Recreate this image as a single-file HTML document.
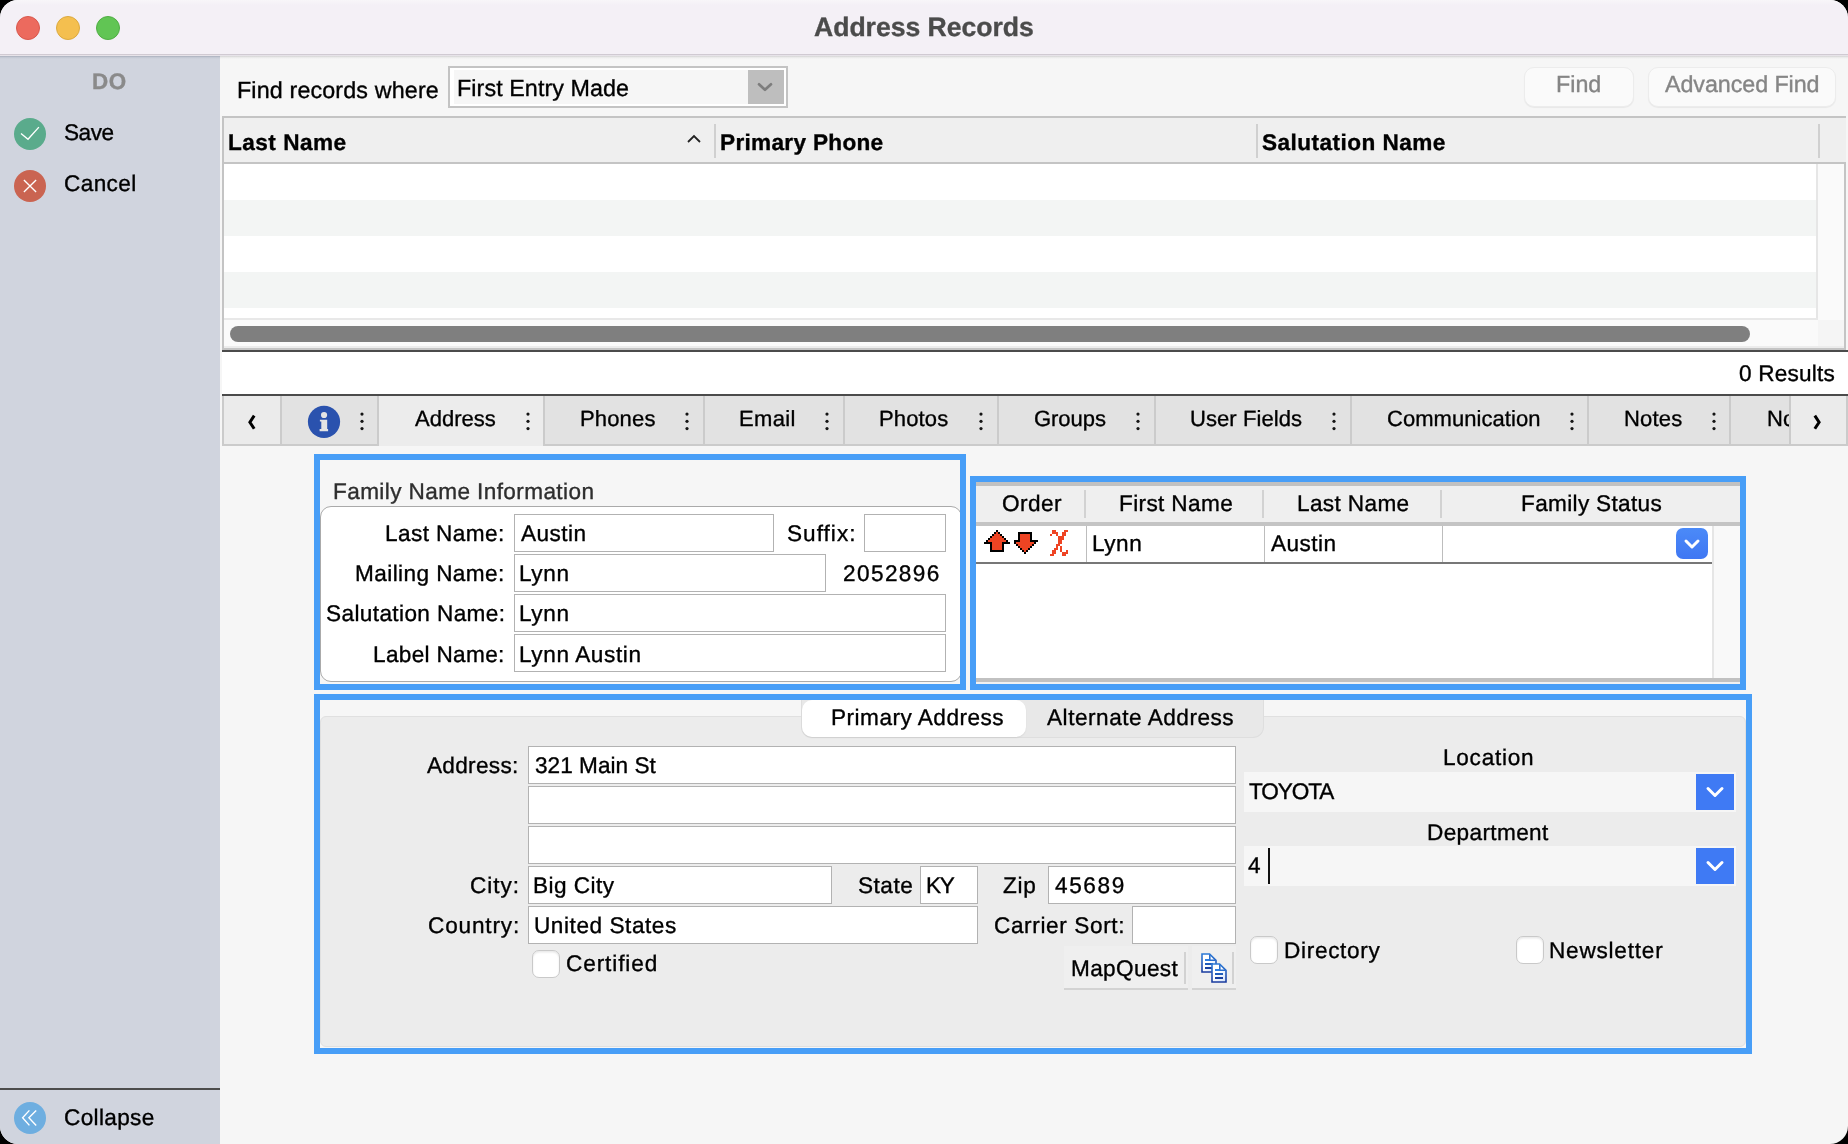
<!DOCTYPE html>
<html>
<head>
<meta charset="utf-8">
<title>Address Records</title>
<style>
*{box-sizing:border-box;margin:0;padding:0}
html,body{width:1848px;height:1144px;overflow:hidden;background:#000}
body{font-family:"Liberation Sans",sans-serif;color:#000;position:relative;text-rendering:geometricPrecision}
.abs,.t,.tb,.tab,.inp{position:absolute}
#win{position:absolute;left:0;top:0;width:1848px;height:1144px;border-radius:18px;background:#f6f6f6;overflow:hidden}
.t{white-space:nowrap;font-size:22.6px;line-height:26px;letter-spacing:.35px}
.tb{white-space:nowrap;font-size:22.4px;line-height:26px;font-weight:bold;letter-spacing:.1px}
.x{position:absolute;white-space:nowrap;line-height:30px;will-change:transform;-webkit-text-stroke:0.35px currentColor}
.r{text-align:right}
.c{text-align:center}
.inp{background:#fff;border:1px solid #b2b2b2;height:38px}
.tab{top:396px;height:48px;background:#e0e0e0;border-right:2px solid #c8c8c8;font-size:24px;line-height:26px;white-space:nowrap}
.tab span{position:absolute;top:10px;will-change:transform}
.tab i{position:absolute;top:13px;width:4px;height:4px;border-radius:2px;background:#222;box-shadow:0 9px 0 #222,0 18px 0 #222}
.cb{position:absolute;width:28px;height:28px;border-radius:7px;background:#fff;border:1px solid #c9c9c9;box-shadow:inset 0 1.5px 2px rgba(0,0,0,.09)}
</style>
</head>
<body>
<div id="win">

<!-- TITLE BAR -->
<div class="abs" style="left:0;top:0;width:1848px;height:54px;background:linear-gradient(#f8f6f9 0,#f4f0f6 5px)"></div>
<div class="abs" style="left:0;top:54px;width:1848px;height:1px;background:#d0cad2"></div>
<div class="abs" style="left:0;top:55px;width:1848px;height:1px;background:#e7e3e9"></div>
<div class="abs" style="left:220px;top:56px;width:1628px;height:3px;background:linear-gradient(#d3d3d3,#eaeaea 45%,#f6f6f6)"></div>
<div class="abs" style="left:16px;top:16px;width:24px;height:24px;border-radius:12px;background:#ec6a5e;border:1px solid #d8584d"></div>
<div class="abs" style="left:56px;top:16px;width:24px;height:24px;border-radius:12px;background:#f4bf4f;border:1px solid #dba93f"></div>
<div class="abs" style="left:96px;top:16px;width:24px;height:24px;border-radius:12px;background:#61c554;border:1px solid #50ad44"></div>

<!-- SIDEBAR -->
<div class="abs" style="left:0;top:56px;width:220px;height:1088px;background:#d0d4de"></div>
<div class="abs" style="left:0;top:56px;width:220px;height:3px;background:linear-gradient(#a8aebb,#c3c8d3 45%,#d0d4de)"></div>
<div class="abs" style="left:14px;top:118px;width:32px;height:32px;border-radius:16px;background:#5aab8c"></div>
<svg class="abs" style="left:14px;top:118px" width="32" height="32" viewBox="0 0 32 32"><path d="M7 15.6 L14 21.3 L24.9 9.1" fill="none" stroke="#fff" stroke-width="1.35"/></svg>
<div class="abs" style="left:14px;top:170px;width:32px;height:32px;border-radius:16px;background:#ca6451"></div>
<svg class="abs" style="left:14px;top:170px" width="32" height="32" viewBox="0 0 32 32"><path d="M9.9 9.9 L22.1 22.1 M22.1 9.9 L9.9 22.1" fill="none" stroke="#fff" stroke-width="1.35"/></svg>
<div class="abs" style="left:0;top:1088px;width:220px;height:2px;background:#4c4c4c"></div>
<div class="abs" style="left:14px;top:1102px;width:32px;height:32px;border-radius:16px;background:#6eaee0"></div>
<svg class="abs" style="left:14px;top:1102px" width="32" height="32" viewBox="0 0 32 32"><path d="M15.4 8.4 L8.6 15.8 L15.4 23.4 M22.2 8.4 L14.9 15.8 L22.2 23.4" fill="none" stroke="#fff" stroke-width="1.4"/></svg>

<!-- FIND BAR -->
<div class="abs" style="left:448px;top:66px;width:340px;height:42px;border:2px solid #c3c3c3;background:#fff"></div>
<div class="abs" style="left:454px;top:70px;width:294px;height:34px;background:#f6f6f6"></div>
<div class="abs" style="left:748px;top:70px;width:36px;height:34px;background:#bebebe"></div>
<svg class="abs" style="left:748px;top:70px" width="36" height="34" viewBox="0 0 36 34"><path d="M11 14.3 L17 19.8 L23 14.3" fill="none" stroke="#7d7d7d" stroke-width="2.7" stroke-linecap="round" stroke-linejoin="round"/></svg>
<div class="abs" style="left:1524px;top:67px;width:110px;height:40px;border-radius:10px;background:#fafafa;border:1px solid #ececec;box-shadow:0 1px 1px rgba(0,0,0,.06)"></div>
<div class="abs" style="left:1648px;top:67px;width:188px;height:40px;border-radius:10px;background:#fafafa;border:1px solid #ececec;box-shadow:0 1px 1px rgba(0,0,0,.06)"></div>

<!-- TABLE -->
<div class="abs" style="left:222px;top:116px;width:1624px;height:234px;background:#c4c4c4"></div>
<div class="abs" style="left:224px;top:118px;width:1622px;height:44px;background:#efefef"></div>
<div class="abs" style="left:224px;top:164px;width:1592px;height:154px;background:#fff"></div>
<div class="abs" style="left:224px;top:200px;width:1592px;height:36px;background:#f3f5f4"></div>
<div class="abs" style="left:224px;top:272px;width:1592px;height:36px;background:#f3f5f4"></div>
<div class="abs" style="left:1816px;top:164px;width:2px;height:156px;background:#e6e6e6"></div>
<div class="abs" style="left:1818px;top:164px;width:26px;height:182px;background:#fafafa"></div>
<div class="abs" style="left:224px;top:318px;width:1594px;height:2px;background:#e8e8e8"></div>
<div class="abs" style="left:224px;top:320px;width:1594px;height:26px;background:#fafafa"></div>
<div class="abs" style="left:224px;top:346px;width:1620px;height:2px;background:#ececec"></div>
<div class="abs" style="left:1818px;top:320px;width:26px;height:26px;background:#f5f5f5"></div>
<div class="abs" style="left:230px;top:326px;width:1520px;height:16px;border-radius:8px;background:#7f7f7f"></div>
<div class="abs" style="left:714px;top:124px;width:2px;height:34px;background:#d0d0d0"></div>
<div class="abs" style="left:1256px;top:124px;width:2px;height:34px;background:#d0d0d0"></div>
<div class="abs" style="left:1818px;top:124px;width:2px;height:34px;background:#d0d0d0"></div>
<svg class="abs" style="left:684px;top:132px" width="20" height="14" viewBox="0 0 20 14"><path d="M4 10 L10 4 L16 10" fill="none" stroke="#222" stroke-width="1.8"/></svg>

<!-- RESULTS BAND -->
<div class="abs" style="left:222px;top:350px;width:1626px;height:2px;background:#4b4b4b"></div>
<div class="abs" style="left:222px;top:352px;width:1626px;height:42px;background:#fff"></div>
<div class="abs" style="left:222px;top:394px;width:1626px;height:2px;background:#4b4b4b"></div>

<!-- TAB BAR -->
<div class="abs" style="left:222px;top:396px;width:1626px;height:50px;background:#cbcbcb"></div>
<div class="abs" style="left:224px;top:396px;width:56px;height:48px;background:#ebebeb"></div>
<div class="abs" style="left:282px;top:396px;width:95px;height:48px;background:#e2e2e2"></div>
<div class="abs" style="left:379px;top:396px;width:164px;height:50px;background:#ececec"></div>
<div class="abs" style="left:545px;top:396px;width:158px;height:48px;background:#e2e2e2"></div>
<div class="abs" style="left:705px;top:396px;width:138px;height:48px;background:#e2e2e2"></div>
<div class="abs" style="left:845px;top:396px;width:152px;height:48px;background:#e2e2e2"></div>
<div class="abs" style="left:999px;top:396px;width:155px;height:48px;background:#e2e2e2"></div>
<div class="abs" style="left:1156px;top:396px;width:194px;height:48px;background:#e2e2e2"></div>
<div class="abs" style="left:1352px;top:396px;width:235px;height:48px;background:#e2e2e2"></div>
<div class="abs" style="left:1589px;top:396px;width:140px;height:48px;background:#e2e2e2"></div>
<div class="abs" style="left:1731px;top:396px;width:58px;height:48px;background:#e2e2e2"></div>
<div class="abs" style="left:1791px;top:396px;width:55px;height:48px;background:#ebebeb"></div>
<svg class="abs" style="left:359.0px;top:410px" width="6" height="24" viewBox="0 0 6 24"><circle cx="3" cy="4.1" r="1.6" fill="#141414"/><circle cx="3" cy="11.35" r="1.6" fill="#141414"/><circle cx="3" cy="18.6" r="1.6" fill="#141414"/></svg>
<svg class="abs" style="left:525.0px;top:410px" width="6" height="24" viewBox="0 0 6 24"><circle cx="3" cy="4.1" r="1.6" fill="#141414"/><circle cx="3" cy="11.35" r="1.6" fill="#141414"/><circle cx="3" cy="18.6" r="1.6" fill="#141414"/></svg>
<svg class="abs" style="left:684.2px;top:410px" width="6" height="24" viewBox="0 0 6 24"><circle cx="3" cy="4.1" r="1.6" fill="#141414"/><circle cx="3" cy="11.35" r="1.6" fill="#141414"/><circle cx="3" cy="18.6" r="1.6" fill="#141414"/></svg>
<svg class="abs" style="left:824.2px;top:410px" width="6" height="24" viewBox="0 0 6 24"><circle cx="3" cy="4.1" r="1.6" fill="#141414"/><circle cx="3" cy="11.35" r="1.6" fill="#141414"/><circle cx="3" cy="18.6" r="1.6" fill="#141414"/></svg>
<svg class="abs" style="left:977.5px;top:410px" width="6" height="24" viewBox="0 0 6 24"><circle cx="3" cy="4.1" r="1.6" fill="#141414"/><circle cx="3" cy="11.35" r="1.6" fill="#141414"/><circle cx="3" cy="18.6" r="1.6" fill="#141414"/></svg>
<svg class="abs" style="left:1135.0px;top:410px" width="6" height="24" viewBox="0 0 6 24"><circle cx="3" cy="4.1" r="1.6" fill="#141414"/><circle cx="3" cy="11.35" r="1.6" fill="#141414"/><circle cx="3" cy="18.6" r="1.6" fill="#141414"/></svg>
<svg class="abs" style="left:1331.3px;top:410px" width="6" height="24" viewBox="0 0 6 24"><circle cx="3" cy="4.1" r="1.6" fill="#141414"/><circle cx="3" cy="11.35" r="1.6" fill="#141414"/><circle cx="3" cy="18.6" r="1.6" fill="#141414"/></svg>
<svg class="abs" style="left:1568.6px;top:410px" width="6" height="24" viewBox="0 0 6 24"><circle cx="3" cy="4.1" r="1.6" fill="#141414"/><circle cx="3" cy="11.35" r="1.6" fill="#141414"/><circle cx="3" cy="18.6" r="1.6" fill="#141414"/></svg>
<svg class="abs" style="left:1711.0px;top:410px" width="6" height="24" viewBox="0 0 6 24"><circle cx="3" cy="4.1" r="1.6" fill="#141414"/><circle cx="3" cy="11.35" r="1.6" fill="#141414"/><circle cx="3" cy="18.6" r="1.6" fill="#141414"/></svg>
<svg class="abs" style="left:240px;top:408px" width="24" height="28" viewBox="0 0 24 28"><path d="M14.2 7.6 L9.9 14.2 L14.2 20.8" fill="none" stroke="#000" stroke-width="3" stroke-linejoin="miter"/></svg>
<svg class="abs" style="left:1805px;top:408px" width="24" height="28" viewBox="0 0 24 28"><path d="M9.8 7.6 L14.1 14.2 L9.8 20.8" fill="none" stroke="#000" stroke-width="3" stroke-linejoin="miter"/></svg>
<svg class="abs" style="left:306px;top:404px" width="36" height="36" viewBox="0 0 36 36"><circle cx="18" cy="17.8" r="16.1" fill="#2a52ae"/><circle cx="18.05" cy="11" r="3.1" fill="#e4e4e4"/><path d="M13.9 15.7 H21.2 V24.9 H22.1 V27.2 H13.6 V24.9 H15.3 V17.6 H13.9 Z" fill="#e4e4e4"/></svg>
<div class="abs" style="left:1731px;top:396px;width:58px;height:48px;overflow:hidden"><div class="x" style="left:35.5px;top:7.8px;font-size:22px">Notes</div></div>

<!-- FAMILY NAME PANEL -->
<div class="abs" style="left:314px;top:454px;width:652px;height:236px;border:6px solid #489ef7"></div>
<div class="abs" style="left:320px;top:506px;width:642px;height:176px;background:#fff;border:1px solid #aaa;border-radius:11px"></div>
<div class="abs" style="left:960px;top:500px;width:6px;height:184px;background:#489ef7"></div>
<div class="inp" style="left:514px;top:514px;width:260px;height:38px"></div>
<div class="inp" style="left:864px;top:514px;width:82px;height:38px"></div>
<div class="inp" style="left:514px;top:554px;width:312px;height:38px"></div>
<div class="inp" style="left:514px;top:594px;width:432px;height:38px"></div>
<div class="inp" style="left:514px;top:634px;width:432px;height:38px"></div>

<!-- FAMILY MEMBERS GRID -->
<div class="abs" style="left:970px;top:476px;width:776px;height:214px;border:6px solid #489ef7;background:#fff"></div>
<div class="abs" style="left:976px;top:482px;width:764px;height:4px;background:#c1c1c1"></div>
<div class="abs" style="left:976px;top:486px;width:764px;height:36px;background:#efefef"></div>
<div class="abs" style="left:976px;top:522px;width:764px;height:4px;background:#c4c4c4"></div>
<div class="abs" style="left:1712px;top:526px;width:28px;height:152px;background:#f9f9f9;border-left:2px solid #e6e6e6"></div>
<div class="abs" style="left:976px;top:678px;width:764px;height:4px;background:#c1c1c1"></div>
<div class="abs" style="left:976px;top:682px;width:764px;height:2px;background:#f1f1f1"></div>
<div class="abs" style="left:976px;top:562px;width:736px;height:2px;background:#777"></div>
<div class="abs" style="left:1084px;top:490px;width:2px;height:28px;background:#d2d2d2"></div>
<div class="abs" style="left:1262px;top:490px;width:2px;height:28px;background:#d2d2d2"></div>
<div class="abs" style="left:1440px;top:490px;width:2px;height:28px;background:#d2d2d2"></div>
<div class="abs" style="left:1086px;top:526px;width:1px;height:36px;background:#bdbdbd"></div>
<div class="abs" style="left:1264px;top:526px;width:1px;height:36px;background:#bdbdbd"></div>
<div class="abs" style="left:1442px;top:526px;width:1px;height:36px;background:#bdbdbd"></div>
<svg class="abs" style="left:980px;top:528px" width="90" height="32" viewBox="0 0 90 32" shape-rendering="crispEdges"><rect x="16" y="2" width="2" height="2" fill="#000"/><rect x="14" y="4" width="2" height="2" fill="#000"/><rect x="16" y="4" width="2" height="2" fill="#ee4423"/><rect x="18" y="4" width="2" height="2" fill="#000"/><rect x="12" y="6" width="2" height="2" fill="#000"/><rect x="14" y="6" width="6" height="2" fill="#ee4423"/><rect x="20" y="6" width="2" height="2" fill="#000"/><rect x="10" y="8" width="2" height="2" fill="#000"/><rect x="12" y="8" width="10" height="2" fill="#ee4423"/><rect x="22" y="8" width="2" height="2" fill="#000"/><rect x="8" y="10" width="2" height="2" fill="#000"/><rect x="10" y="10" width="14" height="2" fill="#ee4423"/><rect x="24" y="10" width="2" height="2" fill="#000"/><rect x="6" y="12" width="2" height="2" fill="#000"/><rect x="8" y="12" width="18" height="2" fill="#ee4423"/><rect x="26" y="12" width="2" height="2" fill="#000"/><rect x="4" y="14" width="8" height="2" fill="#000"/><rect x="12" y="14" width="10" height="2" fill="#ee4423"/><rect x="22" y="14" width="8" height="2" fill="#000"/><rect x="10" y="16" width="2" height="2" fill="#000"/><rect x="12" y="16" width="10" height="2" fill="#ee4423"/><rect x="22" y="16" width="2" height="2" fill="#000"/><rect x="10" y="18" width="2" height="2" fill="#000"/><rect x="12" y="18" width="10" height="2" fill="#ee4423"/><rect x="22" y="18" width="2" height="2" fill="#000"/><rect x="10" y="20" width="2" height="2" fill="#000"/><rect x="12" y="20" width="10" height="2" fill="#ee4423"/><rect x="22" y="20" width="2" height="2" fill="#000"/><rect x="10" y="22" width="14" height="2" fill="#000"/><rect x="38" y="4" width="14" height="2" fill="#000"/><rect x="38" y="6" width="2" height="2" fill="#000"/><rect x="40" y="6" width="10" height="2" fill="#ee4423"/><rect x="50" y="6" width="2" height="2" fill="#000"/><rect x="38" y="8" width="2" height="2" fill="#000"/><rect x="40" y="8" width="10" height="2" fill="#ee4423"/><rect x="50" y="8" width="2" height="2" fill="#000"/><rect x="38" y="10" width="2" height="2" fill="#000"/><rect x="40" y="10" width="10" height="2" fill="#ee4423"/><rect x="50" y="10" width="2" height="2" fill="#000"/><rect x="34" y="12" width="6" height="2" fill="#000"/><rect x="40" y="12" width="10" height="2" fill="#ee4423"/><rect x="50" y="12" width="8" height="2" fill="#000"/><rect x="34" y="14" width="2" height="2" fill="#000"/><rect x="36" y="14" width="18" height="2" fill="#ee4423"/><rect x="54" y="14" width="2" height="2" fill="#000"/><rect x="36" y="16" width="2" height="2" fill="#000"/><rect x="38" y="16" width="14" height="2" fill="#ee4423"/><rect x="52" y="16" width="2" height="2" fill="#000"/><rect x="38" y="18" width="2" height="2" fill="#000"/><rect x="40" y="18" width="10" height="2" fill="#ee4423"/><rect x="50" y="18" width="2" height="2" fill="#000"/><rect x="40" y="20" width="2" height="2" fill="#000"/><rect x="42" y="20" width="6" height="2" fill="#ee4423"/><rect x="48" y="20" width="2" height="2" fill="#000"/><rect x="42" y="22" width="2" height="2" fill="#000"/><rect x="44" y="22" width="2" height="2" fill="#ee4423"/><rect x="46" y="22" width="2" height="2" fill="#000"/><rect x="44" y="24" width="2" height="2" fill="#000"/><rect x="72" y="2" width="4" height="2" fill="#ee4423"/><rect x="84" y="2" width="4" height="2" fill="#ee4423"/><rect x="72" y="4" width="6" height="2" fill="#ee4423"/><rect x="82" y="4" width="4" height="2" fill="#ee4423"/><rect x="70" y="6" width="2" height="2" fill="#ee4423"/><rect x="76" y="6" width="2" height="2" fill="#ee4423"/><rect x="82" y="6" width="4" height="2" fill="#ee4423"/><rect x="78" y="8" width="6" height="2" fill="#ee4423"/><rect x="78" y="10" width="6" height="2" fill="#ee4423"/><rect x="78" y="12" width="4" height="2" fill="#ee4423"/><rect x="78" y="14" width="4" height="2" fill="#ee4423"/><rect x="76" y="16" width="4" height="2" fill="#ee4423"/><rect x="76" y="18" width="2" height="2" fill="#ee4423"/><rect x="80" y="18" width="2" height="2" fill="#ee4423"/><rect x="74" y="20" width="4" height="2" fill="#ee4423"/><rect x="80" y="20" width="2" height="2" fill="#ee4423"/><rect x="72" y="22" width="4" height="2" fill="#ee4423"/><rect x="80" y="22" width="2" height="2" fill="#ee4423"/><rect x="86" y="22" width="2" height="2" fill="#ee4423"/><rect x="72" y="24" width="4" height="2" fill="#ee4423"/><rect x="82" y="24" width="6" height="2" fill="#ee4423"/><rect x="70" y="26" width="4" height="2" fill="#ee4423"/><rect x="82" y="26" width="4" height="2" fill="#ee4423"/></svg>
<div class="abs" style="left:1676px;top:528px;width:32px;height:31px;border-radius:7px;background:linear-gradient(#4b8af8,#3f77f3)"></div>
<svg class="abs" style="left:1676px;top:528px" width="32" height="31" viewBox="0 0 32 31"><path d="M10 13 L16 19 L22 13" fill="none" stroke="#fff" stroke-width="3" stroke-linecap="round" stroke-linejoin="round"/></svg>

<!-- ADDRESS PANEL -->
<div class="abs" style="left:314px;top:694px;width:1438px;height:360px;border:6px solid #489ef7"></div>
<div class="abs" style="left:320px;top:716px;width:1426px;height:331px;background:#ececec;border:1px solid #e0e0e0;border-radius:6px"></div>
<div class="abs" style="left:801px;top:700px;width:463px;height:38px;background:#e8e8e8;border:1px solid #dedede;border-top:0;border-radius:0 0 11px 11px"></div>
<div class="abs" style="left:802px;top:700px;width:224px;height:37px;background:#fff;border-radius:10px;box-shadow:0 1px 1.5px rgba(0,0,0,.07)"></div>
<div class="inp" style="left:528px;top:746px;width:708px;height:38px"></div>
<div class="inp" style="left:528px;top:786px;width:708px;height:38px"></div>
<div class="inp" style="left:528px;top:826px;width:708px;height:38px"></div>
<div class="inp" style="left:528px;top:866px;width:304px;height:38px"></div>
<div class="inp" style="left:920px;top:866px;width:58px;height:38px"></div>
<div class="inp" style="left:1048px;top:866px;width:188px;height:38px"></div>
<div class="inp" style="left:528px;top:906px;width:450px;height:38px"></div>
<div class="inp" style="left:1132px;top:906px;width:104px;height:38px"></div>
<div class="cb" style="left:532px;top:950px"></div>
<div class="abs" style="left:1064px;top:946px;width:124px;height:44px;background:#efefef;border-bottom:2px solid #d3d3d3"></div>
<div class="abs" style="left:1184px;top:952px;width:2px;height:32px;background:#d2d2d2"></div>
<div class="abs" style="left:1192px;top:946px;width:44px;height:44px;background:#efefef;border-bottom:2px solid #d3d3d3"></div>
<div class="abs" style="left:1232px;top:952px;width:2px;height:32px;background:#d2d2d2"></div>
<svg class="abs" style="left:1200px;top:952px" width="28" height="32" viewBox="0 0 28 32"><defs><linearGradient id="cg" x1="0" y1="0" x2="0" y2="1"><stop offset="0" stop-color="#2d7ad6"/><stop offset="1" stop-color="#1a3b9e"/></linearGradient><linearGradient id="cf" x1="0" y1="0" x2="1" y2="1"><stop offset="0.45" stop-color="#fff"/><stop offset="1" stop-color="#cfe0fa"/></linearGradient></defs><path d="M2 2 H9.6 L16 8.4 V20 H2 Z" fill="url(#cf)" stroke="url(#cg)" stroke-width="1.6" stroke-linejoin="miter"/><path d="M9.8 2.6 V8.2 H15.6" fill="none" stroke="#2a6fce" stroke-width="1.6"/><rect x="5" y="7" width="4.4" height="2" fill="#2f7fe2"/><rect x="5" y="11" width="8" height="2" fill="#1f5cbc"/><rect x="5" y="15" width="8" height="2" fill="#173f9f"/><path d="M12 12 H19.6 L26 18.4 V30 H12 Z" fill="url(#cf)" stroke="url(#cg)" stroke-width="1.6" stroke-linejoin="miter"/><path d="M19.8 12.6 V18.2 H25.6" fill="none" stroke="#2a6fce" stroke-width="1.6"/><rect x="15" y="17" width="4.4" height="2" fill="#2f7fe2"/><rect x="15" y="21" width="8" height="2" fill="#1f5cbc"/><rect x="15" y="25" width="8" height="2" fill="#173f9f"/></svg>
<div class="abs" style="left:1244px;top:772px;width:492px;height:40px;background:#f6f6f6"></div>
<div class="abs" style="left:1696px;top:774px;width:38px;height:36px;background:#3f7af4"></div>
<svg class="abs" style="left:1696px;top:774px" width="38" height="36" viewBox="0 0 38 36"><path d="M12 14.5 L19 21.5 L26 14.5" fill="none" stroke="#fff" stroke-width="3" stroke-linecap="round" stroke-linejoin="round"/></svg>
<div class="abs" style="left:1244px;top:846px;width:492px;height:40px;background:#f6f6f6"></div>
<div class="abs" style="left:1268px;top:848px;width:2px;height:36px;background:#111"></div>
<div class="abs" style="left:1696px;top:848px;width:38px;height:36px;background:#3f7af4"></div>
<svg class="abs" style="left:1696px;top:848px" width="38" height="36" viewBox="0 0 38 36"><path d="M12 14.5 L19 21.5 L26 14.5" fill="none" stroke="#fff" stroke-width="3" stroke-linecap="round" stroke-linejoin="round"/></svg>
<div class="cb" style="left:1250px;top:936px"></div>
<div class="cb" style="left:1516px;top:936px"></div>


<!-- TEXT-BEGIN -->
<div class="x" style="left:814.2px;top:12.3px;font-size:26.6px;letter-spacing:-0.03px;color:#4b4b4b;font-weight:bold">Address Records</div>
<div class="x" style="left:91.5px;top:67.3px;font-size:22.4px;letter-spacing:0.60px;color:#8a8a8a;font-weight:bold">DO</div>
<div class="x" style="left:63.8px;top:117.5px;font-size:22.6px;letter-spacing:-0.49px;color:#000">Save</div>
<div class="x" style="left:63.9px;top:169.0px;font-size:22.6px;letter-spacing:0.39px;color:#000">Cancel</div>
<div class="x" style="left:63.9px;top:1102.8px;font-size:22.6px;letter-spacing:0.33px;color:#000">Collapse</div>
<div class="x" style="left:237.4px;top:75.3px;font-size:23.3px;letter-spacing:0.14px;color:#000">Find records where</div>
<div class="x" style="left:457.3px;top:73.3px;font-size:23.3px;letter-spacing:0.08px;color:#000">First Entry Made</div>
<div class="x" style="left:1555.6px;top:69.3px;font-size:23.3px;letter-spacing:-0.01px;color:#858585">Find</div>
<div class="x" style="left:1665.0px;top:69.3px;font-size:23.3px;letter-spacing:-0.07px;color:#858585">Advanced Find</div>
<div class="x" style="left:227.5px;top:127.7px;font-size:22.6px;letter-spacing:0.48px;color:#000;font-weight:bold">Last Name</div>
<div class="x" style="left:719.9px;top:127.7px;font-size:22.6px;letter-spacing:0.31px;color:#000;font-weight:bold">Primary Phone</div>
<div class="x" style="left:1262.3px;top:127.7px;font-size:22.6px;letter-spacing:0.45px;color:#000;font-weight:bold">Salutation Name</div>
<div class="x" style="left:1738.6px;top:359.4px;font-size:22.6px;letter-spacing:0.19px;color:#000">0 Results</div>
<div class="x" style="left:415.1px;top:403.8px;font-size:22px;letter-spacing:0.01px;color:#000">Address</div>
<div class="x" style="left:579.9px;top:403.8px;font-size:22px;letter-spacing:0.16px;color:#000">Phones</div>
<div class="x" style="left:739.4px;top:403.8px;font-size:22px;letter-spacing:0.36px;color:#000">Email</div>
<div class="x" style="left:879.3px;top:403.8px;font-size:22px;letter-spacing:0.14px;color:#000">Photos</div>
<div class="x" style="left:1033.7px;top:403.8px;font-size:22px;letter-spacing:-0.05px;color:#000">Groups</div>
<div class="x" style="left:1189.9px;top:403.8px;font-size:22px;letter-spacing:0.07px;color:#000">User Fields</div>
<div class="x" style="left:1386.5px;top:403.8px;font-size:22px;letter-spacing:0.05px;color:#000">Communication</div>
<div class="x" style="left:1623.9px;top:403.8px;font-size:22px;letter-spacing:0.17px;color:#000">Notes</div>
<div class="x" style="left:333.0px;top:477.3px;font-size:22.6px;letter-spacing:0.39px;color:#2e2e2e">Family Name Information</div>
<div class="x" style="left:385.3px;top:518.7px;font-size:22.6px;letter-spacing:0.41px;color:#000">Last Name:</div>
<div class="x" style="left:355.3px;top:558.9px;font-size:22.6px;letter-spacing:0.41px;color:#000">Mailing Name:</div>
<div class="x" style="left:325.5px;top:598.7px;font-size:22.6px;letter-spacing:0.38px;color:#000">Salutation Name:</div>
<div class="x" style="left:373.2px;top:639.5px;font-size:22.6px;letter-spacing:0.32px;color:#000">Label Name:</div>
<div class="x" style="left:520.7px;top:518.7px;font-size:22.6px;letter-spacing:0.44px;color:#000">Austin</div>
<div class="x" style="left:519.1px;top:558.9px;font-size:22.6px;letter-spacing:0.64px;color:#000">Lynn</div>
<div class="x" style="left:519.1px;top:598.7px;font-size:22.6px;letter-spacing:0.64px;color:#000">Lynn</div>
<div class="x" style="left:519.4px;top:639.5px;font-size:22.6px;letter-spacing:0.60px;color:#000">Lynn Austin</div>
<div class="x" style="left:787.4px;top:518.7px;font-size:22.6px;letter-spacing:1.02px;color:#000">Suffix:</div>
<div class="x" style="left:843.0px;top:558.9px;font-size:22.6px;letter-spacing:1.40px;color:#000">2052896</div>
<div class="x" style="left:1002.0px;top:489.3px;font-size:22.6px;letter-spacing:0.46px;color:#000">Order</div>
<div class="x" style="left:1119.2px;top:489.3px;font-size:22.6px;letter-spacing:0.36px;color:#000">First Name</div>
<div class="x" style="left:1297.2px;top:489.3px;font-size:22.6px;letter-spacing:0.36px;color:#000">Last Name</div>
<div class="x" style="left:1521.2px;top:489.3px;font-size:22.6px;letter-spacing:0.33px;color:#000">Family Status</div>
<div class="x" style="left:1091.6px;top:529.1px;font-size:22.6px;letter-spacing:0.54px;color:#000">Lynn</div>
<div class="x" style="left:1270.9px;top:529.1px;font-size:22.6px;letter-spacing:0.44px;color:#000">Austin</div>
<div class="x" style="left:831.2px;top:703.3px;font-size:22.6px;letter-spacing:0.49px;color:#000">Primary Address</div>
<div class="x" style="left:1046.8px;top:703.3px;font-size:22.6px;letter-spacing:0.52px;color:#000">Alternate Address</div>
<div class="x" style="left:427.1px;top:751.1px;font-size:22.6px;letter-spacing:0.30px;color:#000">Address:</div>
<div class="x" style="left:534.7px;top:751.1px;font-size:22.6px;letter-spacing:0.03px;color:#000">321 Main St</div>
<div class="x" style="left:469.8px;top:871.4px;font-size:22.6px;letter-spacing:0.96px;color:#000">City:</div>
<div class="x" style="left:533.4px;top:871.4px;font-size:22.6px;letter-spacing:0.45px;color:#000">Big City</div>
<div class="x" style="left:857.9px;top:871.4px;font-size:22.6px;letter-spacing:0.50px;color:#000">State</div>
<div class="x" style="left:925.5px;top:871.4px;font-size:22.6px;letter-spacing:-1.20px;color:#000">KY</div>
<div class="x" style="left:1002.5px;top:871.4px;font-size:22.6px;letter-spacing:0.74px;color:#000">Zip</div>
<div class="x" style="left:1054.5px;top:871.4px;font-size:22.6px;letter-spacing:1.62px;color:#000">45689</div>
<div class="x" style="left:427.8px;top:911.3px;font-size:22.6px;letter-spacing:0.84px;color:#000">Country:</div>
<div class="x" style="left:533.5px;top:911.3px;font-size:22.6px;letter-spacing:0.55px;color:#000">United States</div>
<div class="x" style="left:993.7px;top:911.3px;font-size:22.6px;letter-spacing:0.62px;color:#000">Carrier Sort:</div>
<div class="x" style="left:565.9px;top:949.1px;font-size:22.6px;letter-spacing:0.89px;color:#000">Certified</div>
<div class="x" style="left:1071.4px;top:953.5px;font-size:22.6px;letter-spacing:0.36px;color:#000">MapQuest</div>
<div class="x" style="left:1443.4px;top:742.9px;font-size:22.6px;letter-spacing:0.74px;color:#000">Location</div>
<div class="x" style="left:1248.6px;top:777.2px;font-size:22.6px;letter-spacing:-1.10px;color:#000">TOYOTA</div>
<div class="x" style="left:1427.4px;top:817.5px;font-size:22.6px;letter-spacing:0.36px;color:#000">Department</div>
<div class="x" style="left:1248.3px;top:850.6px;font-size:22.6px;letter-spacing:0.00px;color:#000">4</div>
<div class="x" style="left:1284.1px;top:935.5px;font-size:22.6px;letter-spacing:0.68px;color:#000">Directory</div>
<div class="x" style="left:1549.1px;top:935.5px;font-size:22.6px;letter-spacing:0.77px;color:#000">Newsletter</div>
<!-- TEXT-END -->
</div>
</body>
</html>
